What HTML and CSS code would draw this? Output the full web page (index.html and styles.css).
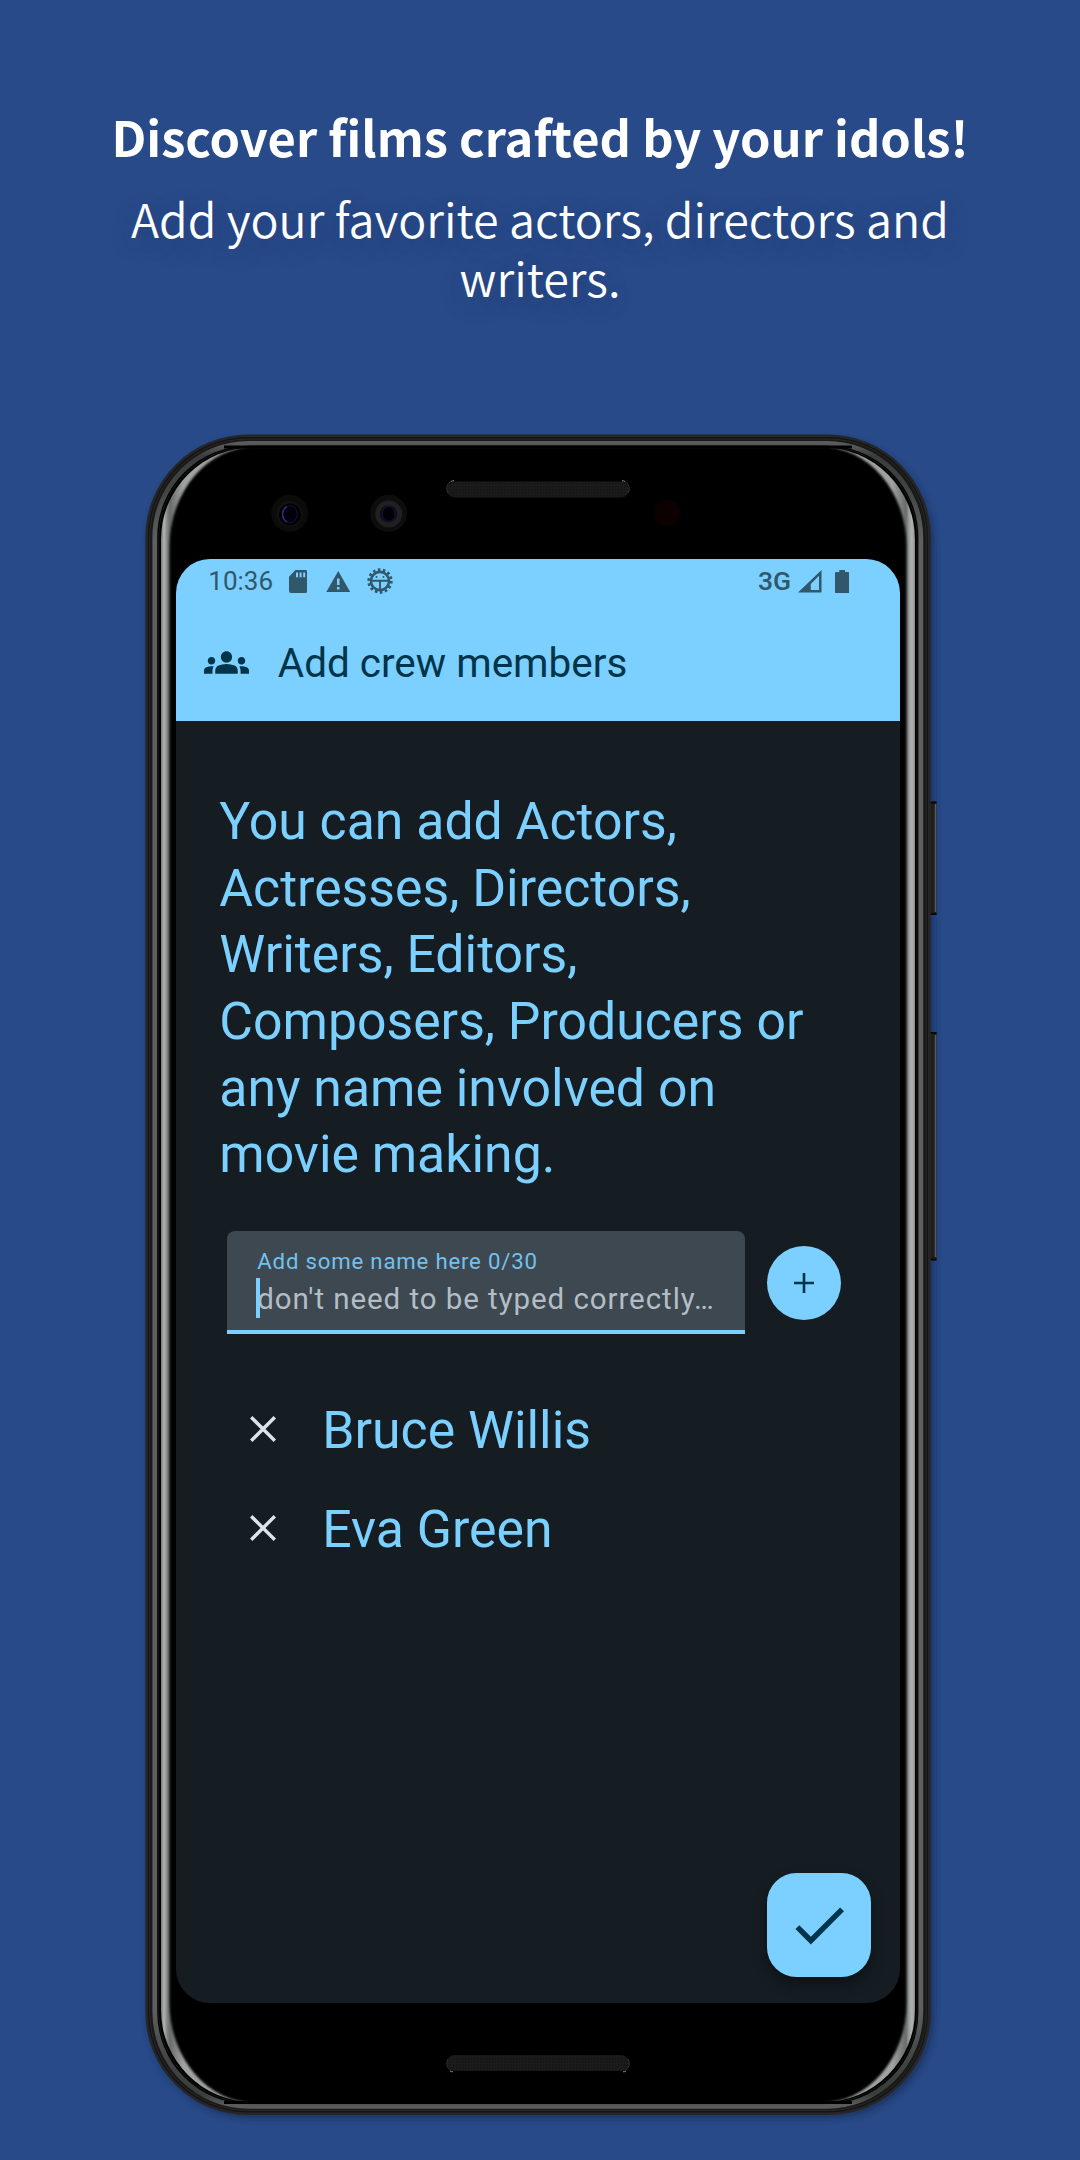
FILE: index.html
```html
<!DOCTYPE html>
<html lang="en">
<head>
<meta charset="utf-8">
<title>Add crew members</title>
<link rel="stylesheet" href="styles.css">
</head>
<body>
<header class="promo">
  <h1 class="promo-title">Discover films crafted by your idols!</h1>
  <p class="promo-text">Add your favorite actors, directors and<br>writers.</p>
</header>
<main class="phone">
  <svg class="phone-frame" viewBox="140 430 810 1700" aria-hidden="true">
    <defs>
      <linearGradient id="silver" x1="161" x2="915" y1="0" y2="0" gradientUnits="userSpaceOnUse">
        <stop offset="0" stop-color="#777878"/><stop offset=".004" stop-color="#b2b4b4"/><stop offset=".008" stop-color="#858686"/><stop offset=".012" stop-color="#6a6b6b"/>
        <stop offset=".03" stop-color="#a0a1a1"/><stop offset=".97" stop-color="#a0a1a1"/>
        <stop offset=".988" stop-color="#6a6b6b"/><stop offset=".992" stop-color="#999a9a"/><stop offset=".996" stop-color="#b2b4b4"/><stop offset="1" stop-color="#888"/>
      </linearGradient>
      <linearGradient id="ring" x1="0" x2="0" y1="441" y2="2109" gradientUnits="userSpaceOnUse">
        <stop offset="0" stop-color="#5a5b5b"/><stop offset=".003" stop-color="#585959"/><stop offset=".009" stop-color="#3a3b3b"/><stop offset=".03" stop-color="#434444"/><stop offset=".06" stop-color="#5e5f5f"/>
        <stop offset=".94" stop-color="#5e5f5f"/><stop offset=".97" stop-color="#434444"/><stop offset=".991" stop-color="#3a3b3b"/><stop offset=".997" stop-color="#585959"/><stop offset="1" stop-color="#5a5b5b"/>
      </linearGradient>
      <filter id="soft" x="-5%" y="-5%" width="110%" height="110%"><feGaussianBlur stdDeviation="3.5"/></filter>
      <filter id="glow"><feGaussianBlur stdDeviation="1"/></filter>
      <pattern id="mesh" width="3" height="3" patternUnits="userSpaceOnUse"><rect width="3" height="3" fill="#1b1b1b"/><rect width="1.5" height="1.5" fill="#141414"/></pattern>
    </defs>
    <rect x="148" y="440" width="786" height="1678" rx="103" fill="#14264c" opacity=".65" filter="url(#soft)"/>
    <g fill="#1e1e1e">
      <rect x="926" y="801.5" width="10.5" height="113.5" rx="1"/>
      <rect x="926" y="1032" width="10.5" height="228.500" rx="1"/>
    </g>
    <path d="M935.500 804V912M935.500 1035V1257" stroke="#5a5a5a" stroke-width="1.5"/>
    <path d="M930 802.500h6.500M930 914h6.500M930 1033h6.500M930 1259.500h6.500" stroke="#080808" stroke-width="2"/>
    <rect x="145.300" y="434.500" width="785.500" height="1680.500" rx="103" fill="#262626"/>
    <rect x="148" y="437" width="780" height="1675.500" rx="100" fill="#141414"/>
    <rect x="149.800" y="439" width="776.600" height="1671.500" rx="98" fill="#191919" stroke="#282828"/>
    <rect x="154.800" y="443.300" width="766" height="1663" rx="94" fill="#000" stroke="url(#ring)" stroke-width="4.800"/>
    <rect x="158.700" y="447" width="758.400" height="1655.600" rx="91" fill="#000" stroke="#171717"/>
    <rect x="161" y="447.500" width="754" height="1654.500" rx="92" fill="url(#silver)"/>
    <rect x="169.500" y="446.500" width="737" height="1656.500" rx="86" ry="100" fill="#000" filter="url(#glow)"/>
    <path d="M224 447H852M224 2102.500H852" stroke="#000" stroke-width="3"/>
    <rect x="447" y="481.500" width="182" height="16" rx="8" fill="url(#mesh)"/>
    <path d="M448 493a8 8 0 0 1 3-11.500M628 493a8 8 0 0 0-3-11.500" fill="none" stroke="#333"/>
    <path d="M451 481.500q1-.8 3-.8M625 481.500q-1-.8-3-.8" fill="none" stroke="#888"/>
    <rect x="447" y="2055" width="182" height="16" rx="8" fill="url(#mesh)"/>
    <path d="M448 2059a8 8 0 0 0 3 11.500M628 2059a8 8 0 0 1-3 11.500" fill="none" stroke="#333"/>
    <path d="M450 2071q1 .8 3 .8M626 2071q-1 .8-3 .8" fill="none" stroke="#888"/>
    <circle cx="289.700" cy="513.300" r="18.500" fill="#0b0b0b"/><circle cx="289.700" cy="514" r="13" fill="#121212"/><circle cx="290" cy="514.500" r="11" fill="#020202"/>
    <ellipse cx="289.800" cy="514.300" rx="7.500" ry="8.500" fill="#00000a" stroke="#14143f"/>
    <path d="M287 506.500a9 9 0 0 0 0 15.500" fill="none" stroke="#2c2e72" stroke-width="1.500"/>
    <circle cx="388.500" cy="513.300" r="18.500" fill="#0d0d0d"/><circle cx="388.700" cy="514" r="13.500" fill="#202020"/><circle cx="388.500" cy="514" r="8.500" fill="#0a0a14"/>
    <ellipse cx="388.700" cy="514" rx="6.500" ry="7.500" fill="#000006" stroke="#171742"/>
    <circle cx="667" cy="513" r="13" fill="#0d0000"/>
  </svg>
  <section class="screen">
    <div class="top">
      <div class="status">
        <span class="clock">10:36</span>
        <svg class="i-sd" viewBox="0 0 18.300 23"><path fill-rule="evenodd" d="M6.500 0H16.300a2 2 0 0 1 2 2V21a2 2 0 0 1-2 2H2a2 2 0 0 1-2-2V6.800zM7 2.500V7.300H9V2.500zM10.600 2.500V7.300H12.600V2.500zM14.200 2.500V7.300H16.200V2.500z"/></svg>
        <svg class="i-warn" viewBox="0 0 24.500 21.500"><path fill-rule="evenodd" d="M12.250 0 24.500 21.500H0zM11 7.500V14H13.500V7.500zM11 16V18.500H13.500V16z"/></svg>
        <svg class="i-bug" viewBox="-13 -13 26 26"><circle r="11.300" fill="none" stroke="currentColor" stroke-width="2.800" stroke-dasharray="2.600 2.471"/><circle r="9.100" fill="none" stroke="currentColor" stroke-width="2.600"/><path d="M-9-.3H9M0-.3V10" stroke="currentColor" stroke-width="1.900"/><circle cx="-3.500" cy="-4" r="1"/><circle cx="3.500" cy="-4" r="1"/></svg>
        <span class="net">3G</span>
        <svg class="i-signal" viewBox="0 0 23.500 22.500"><path fill-rule="evenodd" d="M23.500 0V22.500H0zM21 5.700 12.800 14V20H21z"/></svg>
        <svg class="i-batt" viewBox="0 0 14.300 23.500"><path d="M4.300 0H10V2H13a1.300 1.300 0 0 1 1.300 1.300V22a1.500 1.500 0 0 1-1.500 1.500H1.500A1.500 1.500 0 0 1 0 22V3.300A1.300 1.300 0 0 1 1.300 2h3z"/></svg>
      </div>
      <div class="appbar">
        <svg class="i-crew" viewBox="0 0 24 24"><path d="M12 12.750c1.630 0 3.070.39 4.240.9 1.080.48 1.760 1.560 1.760 2.730V18H6v-1.610c0-1.180.68-2.260 1.760-2.730 1.170-.52 2.610-.91 4.240-.91zM4 13c1.100 0 2-.9 2-2s-.9-2-2-2-2 .9-2 2 .9 2 2 2zm1.130 1.100C4.760 14.040 4.390 14 4 14c-.99 0-1.930.21-2.780.58C.48 14.900 0 15.620 0 16.430V18h4.500v-1.610c0-.83.23-1.610.63-2.290zM20 13c1.100 0 2-.9 2-2s-.9-2-2-2-2 .9-2 2 .9 2 2 2zm4 3.430c0-.81-.48-1.530-1.220-1.850-.85-.37-1.790-.58-2.780-.58-.39 0-.76.04-1.130.1.4.68.63 1.460.63 2.290V18H24v-1.570zM12 6c1.660 0 3 1.340 3 3s-1.340 3-3 3-3-1.340-3-3 1.340-3 3-3z"/></svg>
        <h2 class="appbar-title">Add crew members</h2>
      </div>
    </div>
    <div class="content">
      <p class="intro">You can add Actors,<br>Actresses, Directors,<br>Writers, Editors,<br>Composers, Producers or<br>any name involved on<br>movie making.</p>
      <div class="entry">
        <div class="field">
          <span class="label">Add some name here 0/30</span>
          <span class="hint">don't need to be typed correctly…</span>
          <i class="caret"></i>
        </div>
        <div class="add"><svg class="i-plus" viewBox="0 0 20 20"><path d="M10 0V20M0 10H20" stroke="currentColor" stroke-width="2.600"/></svg></div>
      </div>
      <ul class="names">
        <li class="name"><svg class="i-x" viewBox="0 0 26 26"><path d="M1.200 1.200 24.800 24.800M24.800 1.200 1.200 24.800" stroke="currentColor" stroke-width="3.400"/></svg>Bruce Willis</li>
        <li class="name"><svg class="i-x" viewBox="0 0 26 26"><path d="M1.200 1.200 24.800 24.800M24.800 1.200 1.200 24.800" stroke="currentColor" stroke-width="3.400"/></svg>Eva Green</li>
      </ul>
    </div>
    <div class="fab"><svg class="i-check" viewBox="0 0 24 24"><path d="M9 16.170 4.830 12l-1.420 1.410L9 19 21 7l-1.410-1.410z"/></svg></div>
  </section>
</main>
</body>
</html>
```
FILE: styles.css
```css
* { box-sizing: border-box; }
body {
  margin: 0;
  width: 1080px;
  height: 2160px;
  overflow: hidden;
  display: flex;
  flex-direction: column;
  align-items: center;
  background: #284a88;
  font-family: Roboto, sans-serif;
}
h1, h2, p, ul { margin: 0; padding: 0; font-weight: 400; }
svg { display: block; flex: none; fill: currentColor; }

.promo {
  height: 430px;
  padding-top: 101px;
  color: #fff;
  text-align: center;
  white-space: nowrap;
  font-family: "Noto Sans CJK SC", sans-serif;
}
.promo-title { font-size: 48.850px; line-height: 70px; font-weight: 700; }
.promo-text {
  margin-top: 17px;
  font-size: 46.650px;
  line-height: 59px;
  font-weight: 350;
  text-shadow: 0 6px 24px rgba(30, 40, 110, .3);
}

.phone {
  position: relative;
  width: 810px;
  height: 1700px;
  margin-left: 10px;
  padding: 129.300px 0 0 36.300px;
}
.phone-frame { position: absolute; inset: 0; width: 810px; height: 1700px; }

.screen {
  position: relative;
  display: flex;
  flex-direction: column;
  width: 723.700px;
  height: 1444.200px;
  border-radius: 34px;
  overflow: hidden;
  background: #151d23;
}
.top { height: 162px; background: #7bd0ff; color: #00344a; }
.status {
  display: flex;
  align-items: center;
  height: 44px;
  padding: 0 51px 0 32px;
  color: #31576b;
}
.clock { width: 80.400px; font-size: 26px; line-height: 44px; }
.i-sd { width: 18.300px; height: 23px; margin-right: 19.500px; }
.i-warn { width: 24.500px; height: 21.500px; margin-right: 16px; }
.i-bug { width: 26px; height: 26px; }
.net { margin-left: auto; margin-right: 7px; font-size: 26.500px; line-height: 42px; font-weight: 500; }
.i-signal { width: 23.500px; height: 22.500px; margin-right: 13px; }
.i-batt { width: 14.300px; height: 23.500px; }

.appbar { display: flex; align-items: center; height: 118px; padding-left: 27.500px; }
.i-crew { width: 45px; height: 45px; margin-right: 29px; }
.appbar-title { padding-top: 2px; font-size: 40.450px; line-height: 52px; }

.content { padding: 68px 43px 0; color: #7bd0ff; }
.intro { font-size: 51.750px; line-height: 66.600px; white-space: nowrap; }
.entry { display: flex; align-items: center; gap: 22px; margin: 42px 0 0 7.500px; }
.field {
  position: relative;
  display: flex;
  flex-direction: column;
  width: 517.800px;
  height: 103.600px;
  padding: 16px 0 0 30.500px;
  border-radius: 8px 8px 0 0;
  border-bottom: 4px solid #7bd0ff;
  background: #3d4850;
  white-space: nowrap;
}
.label { font-size: 22.200px; line-height: 28px; letter-spacing: .8px; color: #74c1ee; }
.hint { margin-top: 5px; font-size: 29.500px; line-height: 38px; letter-spacing: .93px; color: #b4bdc5; }
.caret { position: absolute; left: 29.500px; top: 47.300px; width: 3.700px; height: 39.500px; background: #7bd0ff; }
.add {
  display: flex;
  align-items: center;
  justify-content: center;
  width: 74px;
  height: 74px;
  border-radius: 50%;
  background: #7bd0ff;
  color: #00344a;
}
.i-plus { width: 20px; height: 20px; }
.names { margin: 47px 0 0 31px; list-style: none; }
.name { display: flex; align-items: center; height: 99px; font-size: 51.750px; line-height: 66px; }
.i-x { width: 26px; height: 26px; margin: 0 46px 4px 0; color: #dde3ea; }
.fab {
  position: absolute;
  right: 28.700px;
  bottom: 26.500px;
  display: flex;
  align-items: center;
  justify-content: center;
  width: 104px;
  height: 104px;
  border-radius: 29.500px;
  background: #7bd0ff;
  color: #00344a;
  box-shadow: 0 7px 14px rgba(0, 0, 0, .4);
}
.i-check { width: 66.300px; height: 66.300px; }
```
